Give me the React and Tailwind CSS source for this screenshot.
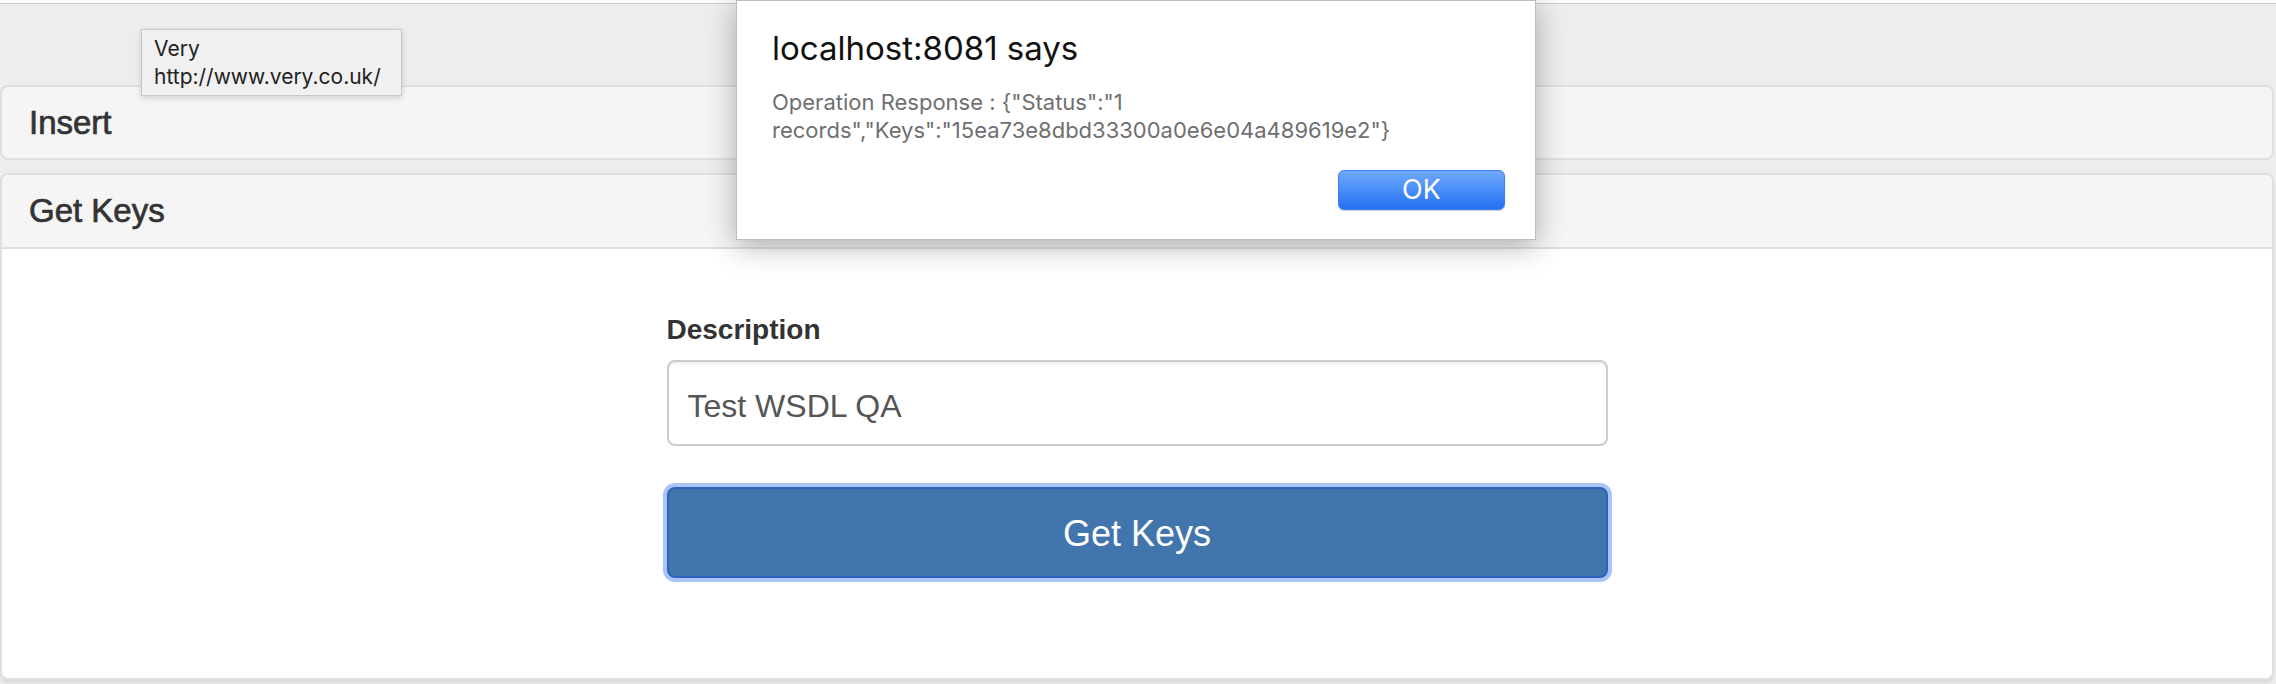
export default function App() {
  return (
    <div className="relative h-[684px] w-[2276px] overflow-hidden bg-[#ededed] font-['Liberation_Sans',Arial,sans-serif]">
      <div className="h-[4px] border-b border-[#cbcbcb] bg-[#fafafa]" />

      {/* collapsed panel */}
      <div className="mr-[2px] mt-[81px] flex h-[75px] items-center rounded-[8px] border-2 border-[#dfdfdf] bg-[#f5f5f5] px-[27px] text-[33px] text-[#333] [-webkit-text-stroke:0.7px_#333]">
        Insert
      </div>

      {/* open panel */}
      <div className="mr-[2px] mt-[13px] h-[507px] overflow-hidden rounded-[8px] border-2 border-[#dfdfdf] bg-white shadow-[0_3px_3px_rgba(0,0,0,0.08)]">
        <div className="flex h-[74px] items-center border-b-2 border-[#dfdfdf] bg-[#f5f5f5] px-[27px] text-[33px] text-[#333] [-webkit-text-stroke:0.7px_#333]">
          Get Keys
        </div>
        <div className="mx-auto w-[941px] pt-[64px]">
          <label className="block text-[28px] font-bold leading-[1.2] text-[#333]">Description</label>
          <div className="mt-[13px] flex h-[86px] items-center rounded-[8px] border-2 border-[#cccccc] px-[19px] pt-[6px] text-[32px] text-[#555] shadow-[inset_0_2px_2px_rgba(0,0,0,0.06)]">
            Test WSDL QA
          </div>
          <button className="mt-[41px] flex h-[91px] w-full items-center justify-center rounded-[8px] border-2 border-[#2f62bf] bg-[#4375ad] pt-[3px] text-[36px] text-white shadow-[0_0_0_4px_#a9c5f7]">
            Get Keys
          </button>
        </div>
      </div>

      {/* tooltip */}
      <div className="absolute left-[141px] top-[29px] h-[67px] w-[261px] border border-[#c8c8c8] bg-[#f0f0f0] px-[12px] pt-[5px] font-['Inter',sans-serif] text-[21px] leading-[28px] text-[#222] shadow-[0_2px_6px_rgba(0,0,0,0.15)]">
        <div>Very</div>
        <div>http://www.very.co.uk/</div>
      </div>

      {/* alert dialog */}
      <div className="absolute left-[736px] top-0 flex h-[240px] w-[800px] flex-col border border-[#bdbdbd] bg-white pl-[35px] pr-[30px] pt-[27px] font-['Inter',sans-serif] shadow-[0_6px_28px_rgba(0,0,0,0.3)]">
        <div className="text-[33px] leading-[40px] text-[#111]">localhost:8081 says</div>
        <div className="mt-[20px] text-[22px] leading-[28px] text-[#6f6f6f]">
          Operation Response : {'{"Status":"1'}
          <br />
          {'records","Keys":"15ea73e8dbd33300a0e6e04a489619e2"}'}
        </div>
        <div className="mt-[26px] flex justify-end">
          <button className="flex h-[40px] w-[167px] items-center justify-center rounded-[6px] border border-[#3a7ef0] bg-gradient-to-b from-[#6da8fb] to-[#2470f3] text-[27px] text-white shadow-[0_1px_1px_rgba(0,0,0,0.2)]">
            OK
          </button>
        </div>
      </div>
    </div>
  );
}
